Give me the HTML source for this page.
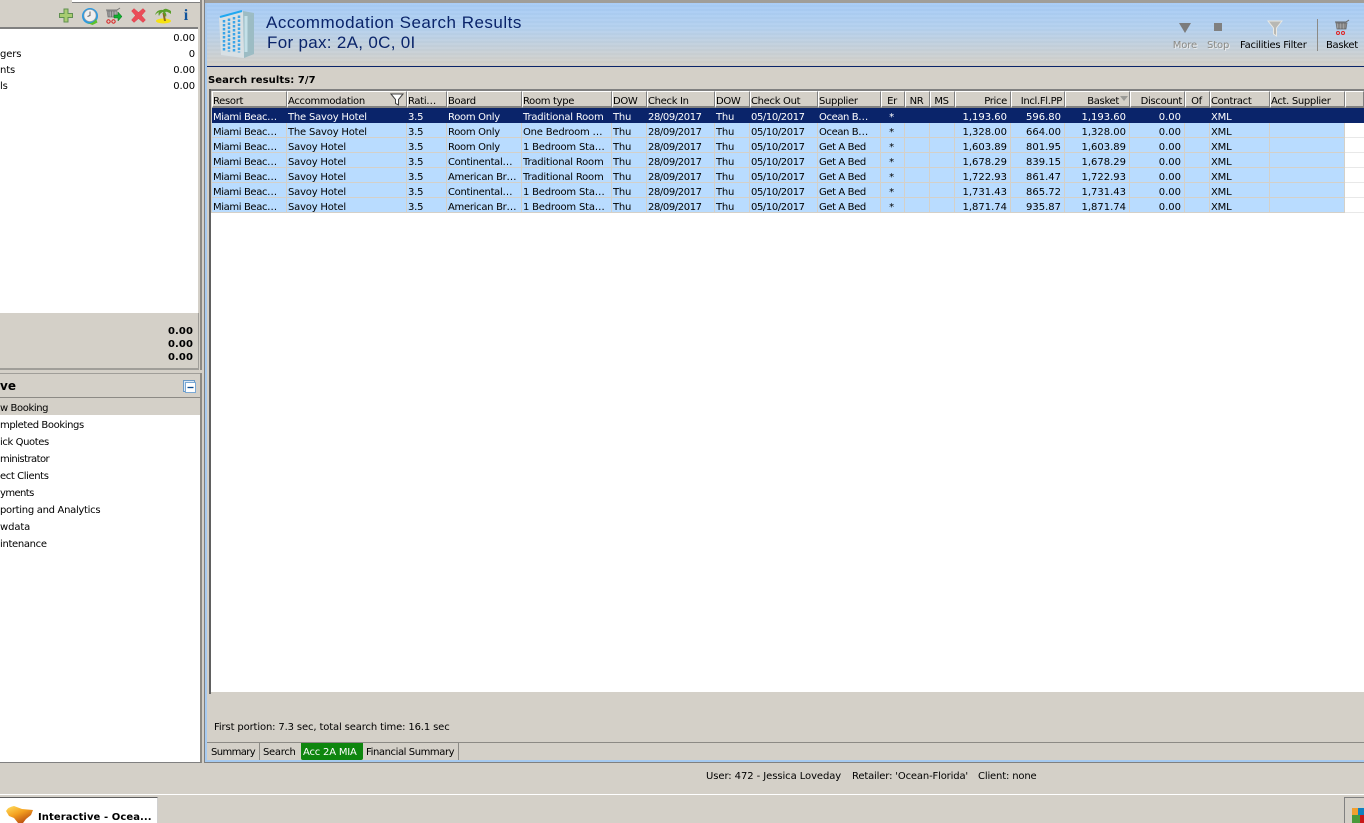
<!DOCTYPE html>
<html><head><meta charset="utf-8"><style>
html,body{margin:0;padding:0;width:1364px;height:823px;overflow:hidden;background:#d4d0c8}
body{position:relative;font-family:"DejaVu Sans","Liberation Sans",sans-serif;font-size:10px;color:#000}
.a{position:absolute}
.t{position:absolute;white-space:nowrap;line-height:14px;height:14px;margin-top:4px;letter-spacing:-.14px}
.m{letter-spacing:-.4px}
.r{text-align:right}
.b{font-weight:bold;letter-spacing:.08px}
table{position:absolute;left:212px;top:91px;border-collapse:separate;border-spacing:0;table-layout:fixed;width:1152px;font-size:10px}
td,th{white-space:nowrap;overflow:hidden;font-weight:normal;text-align:left;box-sizing:border-box}
th{height:17px;line-height:9px;background:#d4d0c8;border-top:1px solid #fff;border-left:1px solid #fff;border-right:1px solid #808080;border-bottom:2px solid #808080;padding:5px 1px 0 0;letter-spacing:-.32px}
td{height:15px;line-height:9px;padding:5px 1px 0 1px;background:#b9dcff;border-right:1px solid #d4d0c8;border-bottom:1px solid #d4d0c8;letter-spacing:-.2px}
td:nth-child(1){letter-spacing:-.38px}
td:nth-child(4){letter-spacing:-.3px}
td:nth-child(7),td:nth-child(9){letter-spacing:-.4px}
td:nth-child(10){letter-spacing:-.4px}
tr.s td{background:#0a246a;color:#fff;border-color:#0a246a}
td.x{background:#fff;border-right:0;border-bottom:1px solid #e8e8e8}
td.n{text-align:right;padding-right:3px;letter-spacing:0}
.c{text-align:center}
td.c{padding-right:3px}
th.c{padding:5px 2px 0 0}
</style></head><body>

<!-- left panel top -->
<div class="a" style="left:72px;top:0;width:128px;height:3px;background:#fff;border-bottom:1px solid #808080;box-sizing:border-box"></div>
<div class="a" style="left:0;top:27px;width:198px;height:2px;background:#808080"></div>
<div class="a" style="left:0;top:29px;width:198px;height:284px;background:#fff"></div>
<div class="a" style="left:200px;top:0;width:2px;height:370px;background:#8c8a85"></div>
<div class="a" style="left:198px;top:313px;width:1px;height:56px;background:#a09e99"></div>
<div class="a" style="left:0;top:368px;width:199px;height:2px;background:#a09e99"></div>

<!-- toolbar icons -->
<svg class="a" style="left:58px;top:7px" width="16" height="17" viewBox="0 0 16 17"><path d="M6 2h4v4.500h4.500v4H10V15H6v-4.500H1.500v-4H6z" fill="#a8cc70" stroke="#5f8f50"/></svg>
<svg class="a" style="left:81px;top:7px" width="18" height="18" viewBox="0 0 18 18"><circle cx="9" cy="9" r="8" fill="#2d9ae0"/><circle cx="9" cy="8.500" r="6" fill="#f0f0f0" stroke="#a0a0a0" stroke-width=".6"/><path d="M9 4.500v4l-2.500 1" stroke="#666" fill="none"/><path d="M5 15.500q6 2.500 10-3.500l1.500 3.500-5 2.500z" fill="#5cc02c"/></svg>
<svg class="a" style="left:105px;top:7px" width="18" height="18" viewBox="0 0 18 18"><path d="M1 3h11l3-2" stroke="#777" fill="none"/><path d="M2 4h10v6H3z" fill="#aaa" stroke="#777" stroke-width=".7"/><path d="M4 4v6M6.500 4v6M9 4v6" stroke="#666" stroke-width=".7"/><circle cx="3.500" cy="14.500" r="1.700" fill="none" stroke="#d82020"/><circle cx="8.500" cy="14.500" r="1.700" fill="none" stroke="#d82020"/><path d="M9 8h4V5l4 4.500-4 4.500v-3H9z" fill="#10b030" stroke="#087018" stroke-width=".5"/></svg>
<svg class="a" style="left:131px;top:8px" width="15" height="15" viewBox="0 0 15 15"><path d="M3 0.500l4.500 4 4.500-4 2.500 2.500-4 4.500 4 4.500-2.500 2.500-4.500-4-4.500 4L.5 12l4-4.500-4-4.500z" fill="#ea4c58" stroke="#d8444e" stroke-width=".5"/></svg>
<svg class="a" style="left:154px;top:7px" width="18" height="17" viewBox="0 0 18 17"><ellipse cx="9.500" cy="14" rx="7.500" ry="2.500" fill="#f6e210"/><path d="M8.500 6l1.500 8h2L10.500 6z" fill="#8a6a20"/><path d="M1 8q2-6 8-5 2-3 8 1 0 2 0 3-4-3-6-2 2 2 1 5-3-4-3-5-3 1-4 4-1-2 0-4-2 1-4 3z" fill="#5a9f2a"/></svg>
<div class="a" style="left:181px;top:7px;width:10px;height:18px;font:bold 16px/18px 'Liberation Serif',serif;color:#10549c;text-align:center">i</div>

<!-- left summary -->
<div class="t r" style="left:140px;width:55px;top:28px">0.00</div>
<div class="t" style="left:0;top:44px">gers</div>
<div class="t r" style="left:140px;width:55px;top:44px">0</div>
<div class="t" style="left:0;top:60px">nts</div>
<div class="t r" style="left:140px;width:55px;top:60px">0.00</div>
<div class="t" style="left:0;top:76px">ls</div>
<div class="t r" style="left:140px;width:55px;top:76px">0.00</div>
<div class="t r b" style="left:140px;width:53px;top:321px">0.00</div>
<div class="t r b" style="left:140px;width:53px;top:334px">0.00</div>
<div class="t r b" style="left:140px;width:53px;top:347px">0.00</div>

<!-- second left panel -->
<div class="a" style="left:0;top:373px;width:201px;height:1px;background:#a09e99"></div>
<div class="a" style="left:200px;top:373px;width:2px;height:390px;background:#8c8a85"></div>
<div class="t b" style="left:0;top:375px;font-size:12px;line-height:15px;height:15px">ve</div>
<svg class="a" style="left:183px;top:380px" width="13" height="13" viewBox="0 0 13 13"><rect x=".5" y=".5" width="11" height="11" fill="#dce8f4" stroke="#6a9ac8"/><rect x="2.500" y="2.500" width="10" height="10" fill="#fff" stroke="#7aa8d4"/><path d="M4.500 7.500h6" stroke="#0a4a90" stroke-width="1.300"/></svg>
<div class="a" style="left:0;top:397px;width:200px;height:1px;background:#8c8a85"></div>
<div class="a" style="left:0;top:398px;width:200px;height:17px;background:#d4d0c8"></div>
<div class="a" style="left:0;top:415px;width:200px;height:347px;background:#fff"></div>
<div class="a" style="left:0;top:762px;width:201px;height:1px;background:#808080"></div>
<div class="t m" style="left:0;top:398px">w Booking</div>
<div class="t m" style="left:0;top:415px">mpleted Bookings</div>
<div class="t m" style="left:0;top:432px">ick Quotes</div>
<div class="t m" style="left:0;top:449px;letter-spacing:-.55px">ministrator</div>
<div class="t m" style="left:0;top:466px">ect Clients</div>
<div class="t m" style="left:0;top:483px;letter-spacing:-.6px">yments</div>
<div class="t m" style="left:0;top:500px;letter-spacing:-.3px">porting and Analytics</div>
<div class="t m" style="left:0;top:517px;letter-spacing:-.1px">wdata</div>
<div class="t m" style="left:0;top:534px;letter-spacing:-.33px">intenance</div>

<!-- main panel frame -->
<div class="a" style="left:204px;top:0;width:1160px;height:763px;background:#d4d0c8"></div>
<div class="a" style="left:204px;top:0;width:1px;height:763px;background:#808080"></div>
<div class="a" style="left:205px;top:0;width:2px;height:762px;background:#a6caf0"></div>
<div class="a" style="left:205px;top:0;width:1159px;height:3px;background:#a09e99"></div>
<div class="a" style="left:207px;top:3px;width:1157px;height:63px;background:repeating-linear-gradient(to bottom,rgba(255,255,255,.045) 0 2px,rgba(0,0,0,.012) 2px 4px),linear-gradient(to bottom,#a6cbf6 0%,#b4d0ee 40%,#d4d0c8 100%)"></div>
<div class="a" style="left:207px;top:66px;width:1157px;height:1px;background:#0a246a"></div>

<!-- building -->
<svg class="a" style="left:219px;top:10px" width="37" height="48" viewBox="0 0 37 48"><path d="M24 1l11 2v41l-10 4z" fill="#9cbcc4"/><path d="M0 8L24 1l1 47L2 45z" fill="#d8e0e4"/><g stroke="#3aa4e8" stroke-width="2.500" stroke-dasharray="2.500 1.500" fill="none"><path d="M5 10v31"/><path d="M10 8.500v33"/><path d="M15 7v35"/><path d="M20 5.500v37"/></g><path d="M27 6v36" stroke="#c4e0e8" stroke-width="3"/><path d="M1 7L23 1" stroke="#20a8f0" stroke-width="2"/></svg>

<div class="t" style="left:266px;top:9px;font:17px/20px 'Liberation Sans',sans-serif;height:20px;color:#0a246a;letter-spacing:.5px">Accommodation Search Results</div>
<div class="t" style="left:267px;top:29px;font:17px/20px 'Liberation Sans',sans-serif;height:20px;color:#0a246a;letter-spacing:.31px">For pax: 2A, 0C, 0I</div>

<!-- right toolbar -->
<svg class="a" style="left:1178px;top:22px" width="14" height="12" viewBox="0 0 14 12"><path d="M1 1h12L7 11z" fill="#7c7c7c"/></svg>
<div class="a" style="left:1214px;top:23px;width:8px;height:8px;background:#808080"></div>
<svg class="a" style="left:1267px;top:19px" width="16" height="18" viewBox="0 0 16 18"><path d="M1 2h14L9.500 9v8l-3-2V9z" fill="#b8b8b4" stroke="#e8e8e4"/></svg>
<div class="t r" style="left:1165px;width:32px;top:35px;color:#8a8a86;text-shadow:1px 1px 0 #eee">More</div>
<div class="t" style="left:1207px;top:35px;color:#8a8a86;text-shadow:1px 1px 0 #eee">Stop</div>
<div class="t" style="left:1240px;top:35px;letter-spacing:-.25px">Facilities Filter</div>
<div class="a" style="left:1317px;top:19px;width:1px;height:32px;background:#8c8a85"></div>
<svg class="a" style="left:1334px;top:19px" width="16" height="17" viewBox="0 0 16 17"><path d="M1 3h11l3-2" stroke="#666" fill="none"/><path d="M2 4h11l-1 6H3z" fill="#a0a0a0" stroke="#666" stroke-width=".7"/><path d="M5 4v6M8 4v6M11 4v6" stroke="#555" stroke-width=".7"/><circle cx="4" cy="14" r="1.500" fill="none" stroke="#e02020"/><circle cx="9" cy="14" r="1.500" fill="none" stroke="#e02020"/></svg>
<div class="t" style="left:1326px;top:35px;letter-spacing:-.3px">Basket</div>

<div class="t b" style="left:208px;top:70px">Search results: 7/7</div>

<!-- grid -->
<div class="a" style="left:209px;top:89px;width:1155px;height:604px;background:#fff"></div>
<div class="a" style="left:209px;top:89px;width:1155px;height:2px;background:#808080"></div>
<div class="a" style="left:209px;top:89px;width:2px;height:605px;background:#606060"></div>
<div class="a" style="left:211px;top:692px;width:1153px;height:2px;background:#d4d0c8"></div>
<div class="a" style="left:211px;top:91px;width:1px;height:122px;background:#d4d0c8"></div>

<table>
<colgroup><col style="width:75px"><col style="width:120px"><col style="width:40px"><col style="width:75px"><col style="width:90px"><col style="width:35px"><col style="width:68px"><col style="width:35px"><col style="width:68px"><col style="width:63px"><col style="width:24px"><col style="width:25px"><col style="width:25px"><col style="width:56px"><col style="width:54px"><col style="width:65px"><col style="width:55px"><col style="width:25px"><col style="width:60px"><col style="width:75px"><col style="width:19px"></colgroup>
<tr><th>Resort</th><th>Accommodation</th><th>Rati…</th><th>Board</th><th>Room type</th><th>DOW</th><th>Check In</th><th>DOW</th><th>Check Out</th><th>Supplier</th><th class="c">Er</th><th class="c">NR</th><th class="c">MS</th><th class="r" style="padding-right:3px">Price</th><th class="r" style="padding-right:2px">Incl.Fl.PP</th><th class="r" style="padding-right:10px">Basket</th><th class="r" style="padding-right:2px">Discount</th><th class="c">Of</th><th>Contract</th><th>Act. Supplier</th><th></th></tr>
<tr class="s"><td>Miami Beac…</td><td>The Savoy Hotel</td><td>3.5</td><td>Room Only</td><td>Traditional Room</td><td>Thu</td><td>28/09/2017</td><td>Thu</td><td>05/10/2017</td><td>Ocean B…</td><td class="c">*</td><td></td><td></td><td class="n">1,193.60</td><td class="n">596.80</td><td class="n">1,193.60</td><td class="n">0.00</td><td></td><td>XML</td><td></td><td></td></tr>
<tr><td>Miami Beac…</td><td>The Savoy Hotel</td><td>3.5</td><td>Room Only</td><td>One Bedroom …</td><td>Thu</td><td>28/09/2017</td><td>Thu</td><td>05/10/2017</td><td>Ocean B…</td><td class="c">*</td><td></td><td></td><td class="n">1,328.00</td><td class="n">664.00</td><td class="n">1,328.00</td><td class="n">0.00</td><td></td><td>XML</td><td></td><td class="x"></td></tr>
<tr><td>Miami Beac…</td><td>Savoy Hotel</td><td>3.5</td><td>Room Only</td><td>1 Bedroom Sta…</td><td>Thu</td><td>28/09/2017</td><td>Thu</td><td>05/10/2017</td><td>Get A Bed</td><td class="c">*</td><td></td><td></td><td class="n">1,603.89</td><td class="n">801.95</td><td class="n">1,603.89</td><td class="n">0.00</td><td></td><td>XML</td><td></td><td class="x"></td></tr>
<tr><td>Miami Beac…</td><td>Savoy Hotel</td><td>3.5</td><td>Continental…</td><td>Traditional Room</td><td>Thu</td><td>28/09/2017</td><td>Thu</td><td>05/10/2017</td><td>Get A Bed</td><td class="c">*</td><td></td><td></td><td class="n">1,678.29</td><td class="n">839.15</td><td class="n">1,678.29</td><td class="n">0.00</td><td></td><td>XML</td><td></td><td class="x"></td></tr>
<tr><td>Miami Beac…</td><td>Savoy Hotel</td><td>3.5</td><td>American Br…</td><td>Traditional Room</td><td>Thu</td><td>28/09/2017</td><td>Thu</td><td>05/10/2017</td><td>Get A Bed</td><td class="c">*</td><td></td><td></td><td class="n">1,722.93</td><td class="n">861.47</td><td class="n">1,722.93</td><td class="n">0.00</td><td></td><td>XML</td><td></td><td class="x"></td></tr>
<tr><td>Miami Beac…</td><td>Savoy Hotel</td><td>3.5</td><td>Continental…</td><td>1 Bedroom Sta…</td><td>Thu</td><td>28/09/2017</td><td>Thu</td><td>05/10/2017</td><td>Get A Bed</td><td class="c">*</td><td></td><td></td><td class="n">1,731.43</td><td class="n">865.72</td><td class="n">1,731.43</td><td class="n">0.00</td><td></td><td>XML</td><td></td><td class="x"></td></tr>
<tr><td>Miami Beac…</td><td>Savoy Hotel</td><td>3.5</td><td>American Br…</td><td>1 Bedroom Sta…</td><td>Thu</td><td>28/09/2017</td><td>Thu</td><td>05/10/2017</td><td>Get A Bed</td><td class="c">*</td><td></td><td></td><td class="n">1,871.74</td><td class="n">935.87</td><td class="n">1,871.74</td><td class="n">0.00</td><td></td><td>XML</td><td></td><td class="x"></td></tr>
</table>
<svg class="a" style="left:390px;top:93px" width="15" height="13" viewBox="0 0 15 13"><path d="M1 1h12L8.500 6.500V12l-3-1.500v-4z" fill="#fff" stroke="#404040"/></svg>
<svg class="a" style="left:1120px;top:96px" width="9" height="6" viewBox="0 0 9 6"><path d="M0 0h8L4 5z" fill="#9a9a96"/></svg>

<!-- footer of main -->
<div class="t" style="left:214px;top:717px">First portion: 7.3 sec, total search time: 16.1 sec</div>
<div class="a" style="left:207px;top:742px;width:1157px;height:1px;background:#8c8a85"></div>
<div class="a" style="left:207px;top:760px;width:1157px;height:2px;background:#a6caf0"></div>
<div class="a" style="left:204px;top:762px;width:1160px;height:1px;background:#808080"></div>
<div class="t" style="left:211px;top:742px;letter-spacing:-.6px">Summary</div>
<div class="a" style="left:259px;top:743px;width:1px;height:17px;background:#8c8a85"></div>
<div class="t" style="left:263px;top:742px;letter-spacing:-.3px">Search</div>
<div class="a" style="left:301px;top:743px;width:62px;height:17px;background:#0e860e;border-radius:0 0 2px 2px"></div>
<div class="t" style="left:303px;top:742px;color:#fff;letter-spacing:-.2px">Acc 2A MIA</div>
<div class="t" style="left:366px;top:742px;letter-spacing:-.42px">Financial Summary</div>
<div class="a" style="left:458px;top:743px;width:1px;height:17px;background:#8c8a85"></div>

<!-- status bar -->
<div class="t" style="left:706px;top:766px;letter-spacing:-.08px">User: 472 - Jessica Loveday</div>
<div class="t" style="left:852px;top:766px;letter-spacing:-.16px">Retailer: 'Ocean-Florida'</div>
<div class="t" style="left:978px;top:766px;letter-spacing:-.16px">Client: none</div>

<!-- taskbar -->
<div class="a" style="left:0;top:794px;width:1364px;height:1px;background:#fff"></div>
<div class="a" style="left:0;top:797px;width:158px;height:26px;background:#fff;border-top:1px solid #606060;border-right:1px solid #d0d0d0;box-sizing:border-box"></div>
<svg class="a" style="left:5px;top:805px" width="29" height="18" viewBox="0 0 29 18"><defs><linearGradient id="g" x1="0" y1="0" x2=".7" y2="1"><stop offset="0" stop-color="#ffe060"/><stop offset=".5" stop-color="#f4a020"/><stop offset="1" stop-color="#b84a10"/></linearGradient></defs><path d="M1 6Q3 2 9 1l8 3 11 1-2 5-5 4-3 4h-5l-4-5-5-2z" fill="url(#g)"/></svg>
<div class="t b" style="left:38px;top:807px;">Interactive - Ocea...</div>
<div class="a" style="left:1344px;top:797px;width:20px;height:26px;border-left:1px solid #808080;border-top:1px solid #808080;box-sizing:border-box"></div>
<div class="a" style="left:1352px;top:808px;width:6px;height:7px;background:#f0a030"></div>
<div class="a" style="left:1358px;top:808px;width:6px;height:7px;background:#1080c0"></div>
<div class="a" style="left:1352px;top:815px;width:8px;height:8px;background:#4a9a3a"></div>
<div class="a" style="left:1360px;top:815px;width:4px;height:8px;background:#c81818"></div>
</body></html>
